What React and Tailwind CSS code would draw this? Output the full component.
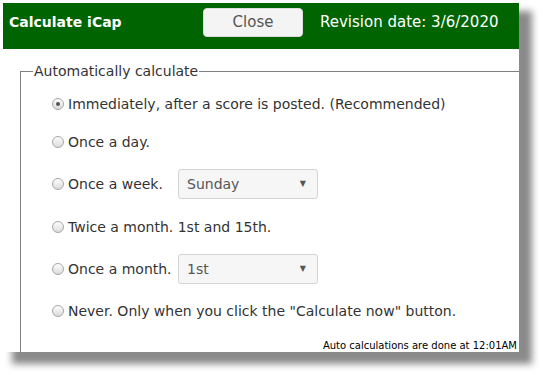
import React, { useState } from 'react';

const OPTIONS = [
    { key: 'now', label: 'Immediately, after a score is posted. (Recommended)', gap: '' },
    { key: 'day', label: 'Once a day.', gap: 'mt-[8px]' },
    { key: 'week', label: 'Once a week.', select: 'Sunday', gap: 'mt-[12px]' },
    { key: 'twice', label: 'Twice a month. 1st and 15th.', gap: 'mt-[13px]' },
    { key: 'month', label: 'Once a month.', select: '1st', gap: 'mt-[12px]' },
    { key: 'never', label: 'Never. Only when you click the "Calculate now" button.', gap: 'mt-[12px]' }
];

const Radio = ({ checked }) => (
    <span className="w-[12px] h-[12px] shrink-0 rounded-full border border-[#a6a6a6] bg-gradient-to-b from-[#fdfdfd] to-[#dcdcdc] flex items-center justify-center">
        {checked && <span className="w-[4px] h-[4px] rounded-full bg-[#555]" />}
    </span>
);

const FakeSelect = ({ value }) => (
    <div className="w-[140px] h-[30px] border border-[#d4d4d4] rounded-[3px] bg-[#f6f6f6] flex items-center justify-between pl-[8px] pr-[11px] text-[#555]">
        <span>{value}</span>
        <span className="text-[8px] text-[#555]">▼</span>
    </div>
);

export default function App() {
    const [choice, setChoice] = useState('now');

    return (
        <div className="w-[543px] h-[376px] bg-white p-[3px] font-['DejaVu_Sans',Verdana,sans-serif]">
            <div className="w-[516px] h-[349px] bg-white overflow-hidden shadow-[11px_10px_7px_2px_#8a8a8a]">
                <header className="h-[46px] bg-[#006400] flex items-start pt-[5px]">
                    <h1 className="ml-[6px] w-[194px] h-[29px] flex items-center text-[14px] font-bold text-white">Calculate iCap</h1>
                    <button type="button" className="w-[100px] h-[29px] rounded-[4px] bg-[#f4f4f4] border border-[#ddd] text-[15px] text-[#555]">
                        Close
                    </button>
                    <span className="ml-[17px] h-[29px] flex items-center text-[15px] text-white">Revision date: 3/6/2020</span>
                </header>

                <fieldset className="ml-[17px] mt-[12px] w-[502px] border border-[#808080] text-[14px] text-[#333]">
                    <legend className="ml-[12px] px-[1px] text-[14px] text-[#333]">Automatically calculate</legend>
                    <div className="pl-[31px] pt-[7px] flex flex-col">
                        {OPTIONS.map((opt) => (
                            <label
                                key={opt.key}
                                onClick={() => setChoice(opt.key)}
                                className={`h-[30px] flex items-center cursor-pointer ${opt.gap}`}
                            >
                                <Radio checked={choice === opt.key} />
                                <span className={opt.select ? 'ml-[4px] w-[110px]' : 'ml-[4px]'}>{opt.label}</span>
                                {opt.select && <FakeSelect value={opt.select} />}
                            </label>
                        ))}
                    </div>
                    <p className="mt-[12px] pr-[4px] text-right text-[10px] text-black">Auto calculations are done at 12:01AM</p>
                </fieldset>
            </div>
        </div>
    );
}
